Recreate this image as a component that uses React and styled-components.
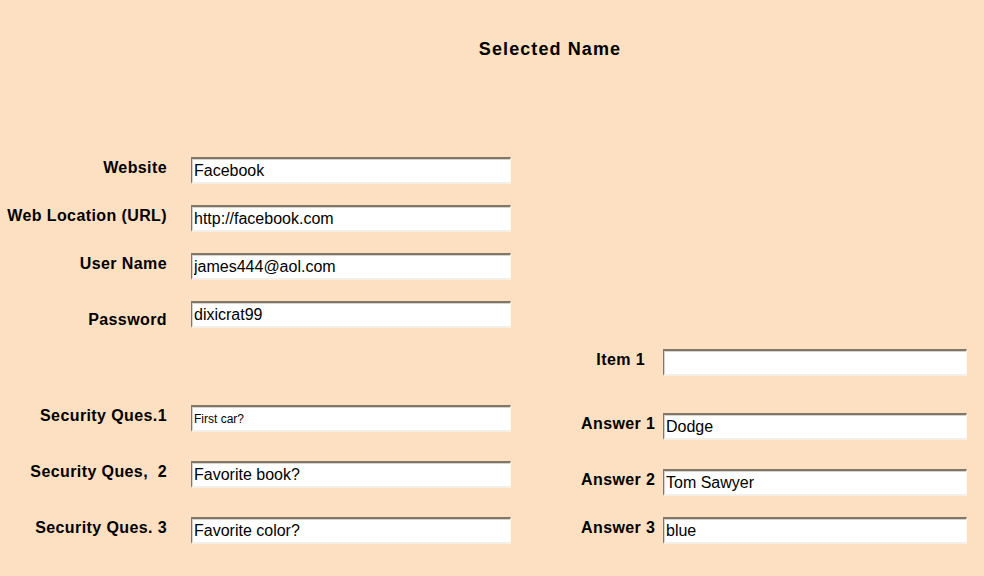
import React from "react";
import styled, { createGlobalStyle } from "styled-components";

const GlobalStyle = createGlobalStyle`
    html, body {
        margin: 0;
        padding: 0;
        background: #fddfc1;
    }
    body {
        font-family: "Liberation Sans", Arial, sans-serif;
        color: #000;
    }
`;

const Page = styled.div`
    width: 984px;
    height: 576px;
    background: #fddfc1;
    overflow: hidden;
`;

const Title = styled.h1`
    margin: 0;
    // centred a bit right of the page middle
    padding: 38px 0 0 116px;
    height: 32px;
    text-align: center;
    font-size: 18px;
    line-height: 22px;
    font-weight: 700;
    letter-spacing: 1.1px;
`;

const Body = styled.div`
    display: flex;
    gap: 70px;
    margin-top: 87px;
`;

const Column = styled.div`
    display: flex;
    flex-direction: column;
    margin-top: ${(p) => p.$top || 0}px;
`;

const Row = styled.div`
    display: grid;
    grid-template-columns: ${(p) => p.$label}px ${(p) => p.$input}px;
    column-gap: ${(p) => p.$gap}px;
    align-items: start;
    height: 27px;
    margin-top: ${(p) => p.$top || 0}px;
`;

const Label = styled.label`
    text-align: right;
    font-size: 16px;
    line-height: 22px;
    font-weight: 700;
    letter-spacing: 0.4px;
    white-space: pre;
    margin-top: ${(p) => p.$shift || 0}px;
    padding-right: ${(p) => p.$pad || 0}px;
`;

const Field = styled.input`
    box-sizing: border-box;
    width: 100%;
    height: 27px;
    margin: 0;
    padding: 0 2px;
    background: #fff;
    border-style: solid;
    border-width: 2px 1px 2px 1px;
    border-color: #7e7868 #fbf6ee #f3eee6 #7e7868;
    box-shadow: inset 1px 1px 0 #d8d2c8;
    font-family: "Liberation Sans", Arial, sans-serif;
    font-size: ${(p) => (p.$small ? 12 : 16)}px;
    color: #000;
    outline: none;
`;

const left = [
    { label: "Website", value: "Facebook", top: 0 },
    { label: "Web Location (URL)", value: "http://facebook.com", top: 21 },
    { label: "User Name", value: "james444@aol.com", top: 21 },
    { label: "Password", value: "dixicrat99", top: 21, shift: 8 },
    { label: "Security Ques.1", value: "First car?", top: 77, small: true },
    { label: "Security Ques,  2", value: "Favorite book?", top: 29 },
    { label: "Security Ques. 3", value: "Favorite color?", top: 29 },
];

const right = [
    { label: "Item 1", value: "", top: 0, pad: 12 },
    { label: "Answer 1", value: "Dodge", top: 37, pad: 3 },
    { label: "Answer 2", value: "Tom Sawyer", top: 29, pad: 3 },
    { label: "Answer 3", value: "blue", top: 21, pad: 3 },
];

const App = () => {
    return (
        <Page>
            <GlobalStyle />
            <Title>Selected Name</Title>
            <Body>
                <Column>
                    {left.map((f) => (
                        <Row key={f.label} $label={167} $input={320} $gap={24} $top={f.top}>
                            <Label $shift={f.shift}>{f.label}</Label>
                            <Field readOnly defaultValue={f.value} $small={f.small} />
                        </Row>
                    ))}
                </Column>
                <Column $top={192}>
                    {right.map((f) => (
                        <Row key={f.label} $label={76} $input={304} $gap={6} $top={f.top}>
                            <Label $pad={f.pad}>{f.label}</Label>
                            <Field readOnly defaultValue={f.value} />
                        </Row>
                    ))}
                </Column>
            </Body>
        </Page>
    );
};

export default App;
